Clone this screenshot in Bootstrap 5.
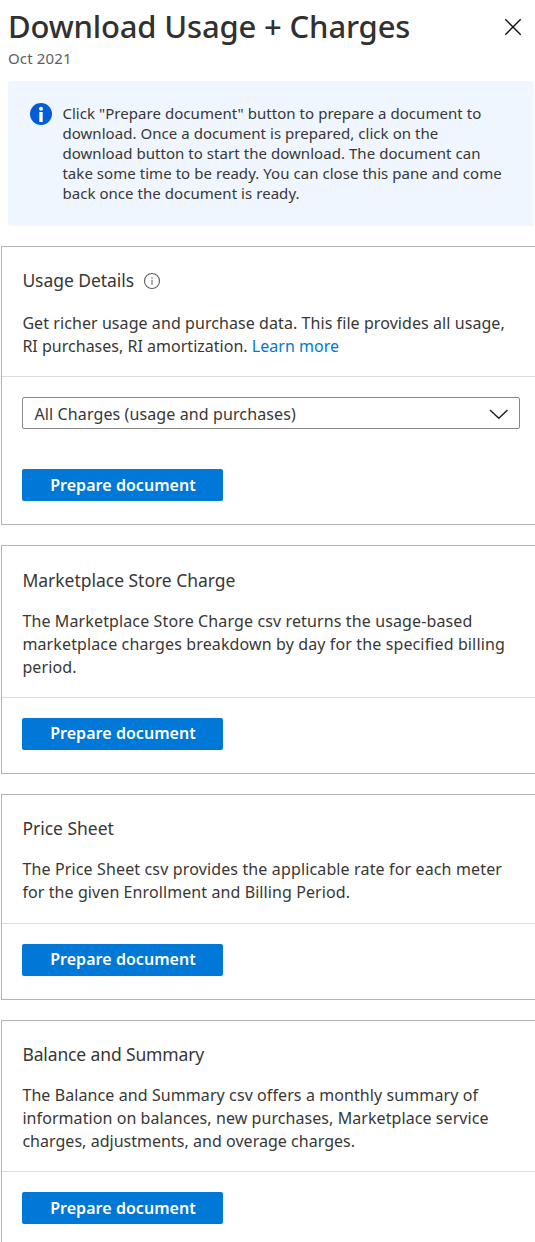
<!DOCTYPE html>
<html lang="en">
<head>
<meta charset="utf-8">
<meta name="viewport" content="width=device-width, initial-scale=1">
<title>Download Usage + Charges</title>
<link href="https://cdn.jsdelivr.net/npm/bootstrap@5.3.0/dist/css/bootstrap.min.css" rel="stylesheet">
<style>
body{font:400 16px/23px "Noto Sans",sans-serif;color:#383736;background:#fff;overflow:hidden}
.pane-head{height:81px;padding:5px 14px 0 8px}
.pane-title{font-size:31px;font-weight:500;line-height:42px;letter-spacing:-.16px;margin:0 0 1px;color:#323130}
.pane-sub{font-size:15px;line-height:20px;letter-spacing:.15px;color:#605e5c}
.btn-x{padding:0;margin-top:12px;width:18px;height:18px;line-height:0}
.notice{margin:0 1px 20px 8px;height:145px;padding:22px 0 0 22px;gap:10.4px;border:0;border-radius:3px;background:#eff6ff;color:#383736;font-size:15px;line-height:20px;letter-spacing:.05px}
.panel{margin:0 -2px 20px 1px;border:1px solid #b3b3b3;border-radius:0;color:inherit}
.panel-top{padding:21px 0 18px 20.4px;border-bottom:1px solid #dadde2}
.panel-title{font-size:17.5px;font-weight:400;line-height:24px;margin:0 0 18px;letter-spacing:-.02px}
.panel-act{padding:20px 0 23px 20px}
.txt{margin:0;white-space:nowrap}
.s0{letter-spacing:.015px}.s4{letter-spacing:.03px}.s7{letter-spacing:.072px}.s10{letter-spacing:.09px}.s13{letter-spacing:.125px}.s15{letter-spacing:.14px}
.txt a{color:#0078d4;text-decoration:none}
.btn-prep{width:201px;height:32px;padding:0 0 0 1px;border:0;border-radius:2px;background:#0078d7;color:#fff;font-size:16px;font-weight:600;line-height:32px;letter-spacing:.05px}
.btn-up{padding-bottom:2px;line-height:30px}
.picker{width:498px;height:32px;margin-bottom:40px;padding:0 10px 0 11.5px;border:1px solid #8a8886;border-radius:2px;letter-spacing:.11px;line-height:32px}
.picker span{padding-top:2px}
</style>
</head>
<body>
<header class="pane-head d-flex justify-content-between align-items-start">
  <div>
    <h1 class="pane-title">Download Usage + Charges</h1>
    <div class="pane-sub">Oct 2021</div>
  </div>
  <button class="btn btn-x" aria-label="Close"><svg width="18" height="18" fill="none" stroke="#111" stroke-width="1.4"><path d="M1.3 1.3l15.4 15.4M16.7 1.3L1.3 16.7"/></svg></button>
</header>

<div class="alert notice d-flex align-items-start" role="alert">
  <svg class="flex-shrink-0" width="22" height="22"><circle cx="11" cy="11" r="11" fill="#015cda"/><circle cx="11" cy="5.7" r="2" fill="#fff"/><rect x="9.3" y="9" width="3.4" height="10" rx=".3" fill="#fff"/></svg>
  <div class="text-nowrap">Click "Prepare document" button to prepare a document to<br>download. Once a document is prepared, click on the<br>download button to start the download. The document can<br>take some time to be ready. You can close this pane and come<br>back once the document is ready.</div>
</div>

<section class="card panel">
  <div class="panel-top">
    <div class="d-flex align-items-center" style="margin-bottom:20px">
      <h2 class="panel-title mb-0" style="letter-spacing:-.06px">Usage Details</h2>
      <svg style="margin-left:9px" width="18" height="20" fill="none" stroke="#605e5c"><circle cx="9" cy="11" r="7.5" stroke-width="1.1"/><path d="M9 9.8v5M9 7.2v1.5" stroke-width="1.4" stroke="#8a8886"/></svg>
    </div>
    <p class="txt"><span class="s7">Get richer usage and purchase data. This file provides all usage,</span><br><span class="s0">RI purchases, RI amortization. <a href="#">Learn more</a></span></p>
  </div>
  <div class="panel-act">
    <div class="picker d-flex align-items-center justify-content-between">
      <span>All Charges (usage and purchases)</span>
      <svg width="20" height="14" fill="none" stroke="#222" stroke-width="1.5"><path d="M1 4l8.8 8.3L18.5 4"/></svg>
    </div>
    <button class="btn btn-prep d-block">Prepare document</button>
  </div>
</section>

<section class="card panel">
  <div class="panel-top" style="padding-top:22px">
    <h2 class="panel-title">Marketplace Store Charge</h2>
    <p class="txt"><span class="s13">The Marketplace Store Charge csv returns the usage-based<br>marketplace charges breakdown by day for the specified billing<br>period.</span></p>
  </div>
  <div class="panel-act"><button class="btn btn-prep btn-up d-block">Prepare document</button></div>
</section>

<section class="card panel">
  <div class="panel-top" style="padding-bottom:19px">
    <h2 class="panel-title">Price Sheet</h2>
    <p class="txt"><span class="s15">The Price Sheet csv provides the applicable rate for each meter</span><br><span class="s10">for the given Enrollment and Billing Period.</span></p>
  </div>
  <div class="panel-act"><button class="btn btn-prep btn-up d-block">Prepare document</button></div>
</section>

<section class="card panel mb-0">
  <div class="panel-top">
    <h2 class="panel-title" style="letter-spacing:-.13px">Balance and Summary</h2>
    <p class="txt"><span class="s10">The Balance and Summary csv offers a monthly summary of</span><br><span class="s7">information on balances, new purchases, Marketplace service</span><br><span class="s4">charges, adjustments, and overage charges.</span></p>
  </div>
  <div class="panel-act"><button class="btn btn-prep d-block">Prepare document</button></div>
</section>
<script src="https://cdn.jsdelivr.net/npm/bootstrap@5.3.0/dist/js/bootstrap.bundle.min.js"></script>
</body>
</html>
